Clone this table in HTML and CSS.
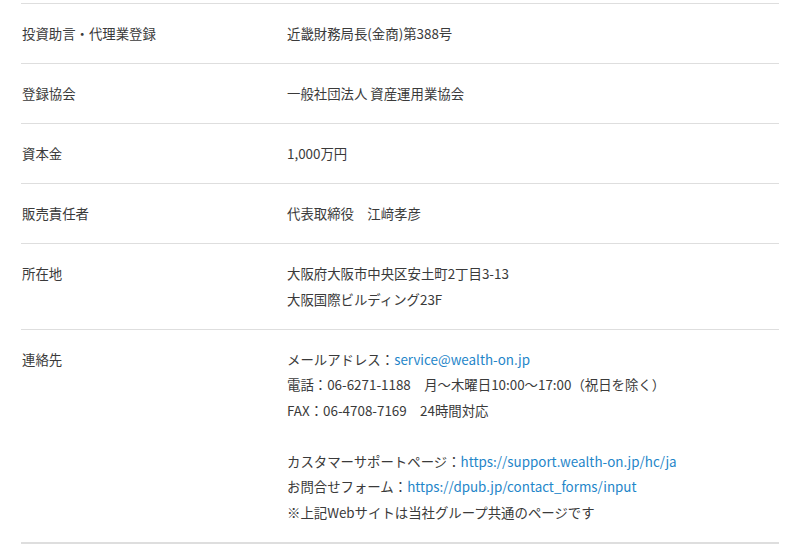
FILE: index.html
```html
<!DOCTYPE html>
<html lang="ja">
<head>
<meta charset="utf-8">
<link rel="stylesheet" href="styles.css">
</head>
<body>
<div class="info">
  <div class="row">
    <div class="label">投資助言・代理業登録</div>
    <div class="value">近畿財務局長(金商)第388号</div>
  </div>
  <div class="row">
    <div class="label">登録協会</div>
    <div class="value">一般社団法人 資産運用業協会</div>
  </div>
  <div class="row">
    <div class="label">資本金</div>
    <div class="value">1,000万円</div>
  </div>
  <div class="row">
    <div class="label">販売責任者</div>
    <div class="value">代表取締役　江﨑孝彦</div>
  </div>
  <div class="row">
    <div class="label">所在地</div>
    <div class="value">大阪府大阪市中央区安土町2丁目3-13<br>大阪国際ビルディング23F</div>
  </div>
  <div class="row last">
    <div class="label">連絡先</div>
    <div class="value">メールアドレス：<a class="link" href="#">service@wealth-on.jp</a><br>電話：06-6271-1188　月～木曜日10:00～17:00（祝日を除く）<br>FAX：06-4708-7169　24時間対応<br><br>カスタマーサポートページ：<a class="link" href="#">https://support.wealth-on.jp/hc/ja</a><br>お問合せフォーム：<a class="link" href="#">https://dpub.jp/contact_forms/input</a><br>※上記Webサイトは当社グループ共通のページです</div>
  </div>
</div>
</body>
</html>
```

FILE: styles.css
```css
html, body {
  margin: 0;
  padding: 0;
  background: #fff;
}
body {
  font-family: "Noto Sans CJK JP", "Noto Sans", sans-serif;
  font-size: 13.4px;
  line-height: 25.6px;
  color: #3a3a3a;
}
.info {
  margin: 3px 21px 0 21px;
  width: 758px;
  border-top: 1px solid #dedede;
}
.row {
  display: grid;
  grid-template-columns: 265px 1fr;
  padding: 17px 0 16.4px 1px;
  border-bottom: 1px solid #dedede;
}
.row.last {
  border-bottom-width: 2px;
}
.link {
  color: #1f86c9;
  text-decoration: none;
}
```
